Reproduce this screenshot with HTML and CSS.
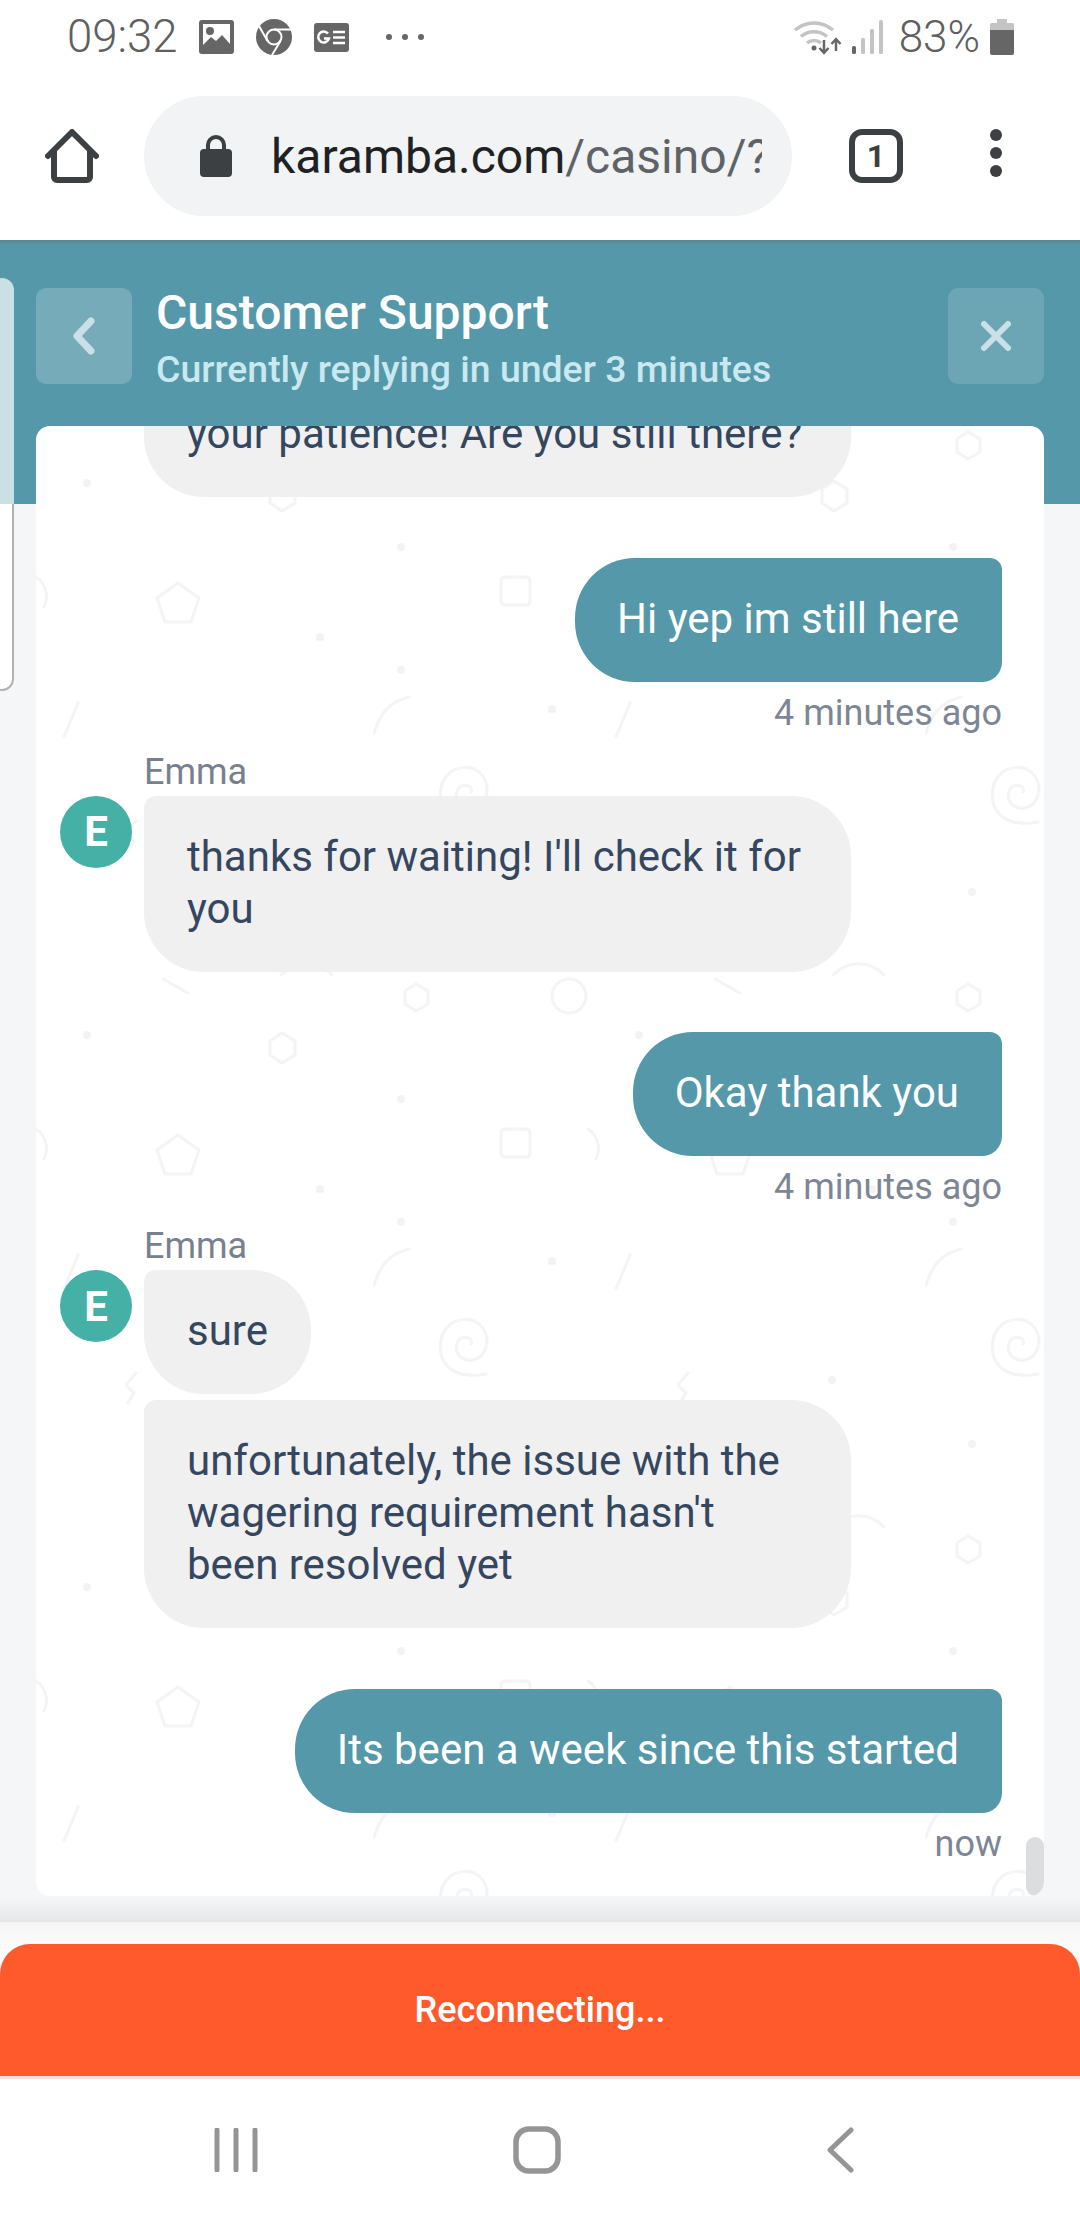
FILE: index.html
```html
<!DOCTYPE html>
<html lang="en">
<head>
<meta charset="utf-8">
<title>Customer Support</title>
<link rel="stylesheet" href="styles.css">
</head>
<body>
<div class="phone">
  <div class="status">
    <span class="clock">09:32</span>
    <svg class="st-img" width="35" height="34" viewBox="0 0 35 34"><rect width="35" height="34" rx="3" fill="#666"/><path d="M4 4h27v20l-8-9-6 6-5-4-8 8z" fill="#fff"/><circle cx="11" cy="11" r="4" fill="#666"/></svg>
    <svg class="st-chrome" width="36" height="36" viewBox="0 0 36 36"><circle cx="18" cy="18" r="18" fill="#666"/><circle cx="18" cy="18" r="7.5" fill="#666" stroke="#fff" stroke-width="2"/><path d="M18 10.500h17M11.500 22 3 7M24.500 22 16 36" fill="none" stroke="#fff" stroke-width="2"/></svg>
    <svg class="st-news" width="35" height="29" viewBox="0 0 35 29"><rect width="35" height="29" rx="3" fill="#666"/><path d="M14 10.500a5.500 5.500 0 1 0 1 5h-5" fill="none" stroke="#fff" stroke-width="2.500"/><path d="M19 9h12M19 14.500h12M19 20h12" stroke="#fff" stroke-width="2.500"/></svg>
    <span class="st-more"><i></i><i></i><i></i></span>
    <span class="st-spacer"></span>
    <svg class="st-wifi" width="50" height="38" viewBox="0 0 50 38"><path d="M2 12a29 29 0 0 1 38 0" fill="none" stroke="#c4c4c4" stroke-width="3.500"/><path d="M8 18.500a20 20 0 0 1 26 0" fill="none" stroke="#c4c4c4" stroke-width="3.500"/><path d="M14 25a11 11 0 0 1 14 0" fill="none" stroke="#c4c4c4" stroke-width="3.500"/><circle cx="21" cy="30" r="2.500" fill="#666"/><path d="M31 22v13M26.500 30l4.500 5 4.500-5M43 33V21M38.500 26l4.500-5 4.500 5" fill="none" stroke="#666" stroke-width="2.500"/></svg>
    <svg class="st-signal" width="31" height="34" viewBox="0 0 31 34"><rect x="0" y="26" width="4" height="8" rx="1.500" fill="#666"/><rect x="9" y="18" width="4" height="16" rx="1.500" fill="#c4c4c4"/><rect x="18" y="9" width="4" height="25" rx="1.500" fill="#c4c4c4"/><rect x="27" y="0" width="4" height="34" rx="1.500" fill="#c4c4c4"/></svg>
    <span class="pct">83%</span>
    <svg class="st-batt" width="24" height="36" viewBox="0 0 24 36"><path d="M7 0h10v4h5a2 2 0 0 1 2 2v7H0V6a2 2 0 0 1 2-2h5z" fill="#c4c4c4"/><path d="M0 11h24v23a2 2 0 0 1-2 2H2a2 2 0 0 1-2-2z" fill="#666"/></svg>
  </div>

  <div class="toolbar">
    <svg class="tb-home" width="54" height="54" viewBox="0 0 54 54"><path d="M3 27 27 3l24 24M9 22v26a3 3 0 0 0 3 3h30a3 3 0 0 0 3-3V22" fill="none" stroke="#3c4043" stroke-width="6" stroke-linecap="round" stroke-linejoin="round"/></svg>
    <div class="url">
      <svg class="lock" width="32" height="42" viewBox="0 0 32 42"><path d="M8 16v-6a8 8 0 0 1 16 0v6" fill="none" stroke="#3c4043" stroke-width="4"/><rect y="14" width="32" height="28" rx="4" fill="#3c4043"/></svg>
      <span class="url-text"><b>karamba.com</b>/casino/?</span>
    </div>
    <div class="tabs">1</div>
    <div class="menu"><i></i><i></i><i></i></div>
  </div>

  <main class="main">
    <div class="sliver"></div>
    <header class="head">
      <button class="head-btn back"><svg width="24" height="38" viewBox="0 0 24 38"><path d="M19 4 5 19l14 15" fill="none" stroke="#c9e1e6" stroke-width="7" stroke-linecap="round" stroke-linejoin="round"/></svg></button>
      <div class="head-text">
        <div class="title">Customer Support</div>
        <div class="sub">Currently replying in under 3 minutes</div>
      </div>
      <button class="head-btn close"><svg width="30" height="30" viewBox="0 0 30 30"><path d="M3 3l24 24M27 3 3 27" fill="none" stroke="#c9e1e6" stroke-width="6" stroke-linecap="round"/></svg></button>
    </header>

    <section class="card">
      <svg class="pattern" width="1008" height="1470" aria-hidden="true">
        <defs>
          <pattern id="doodles" patternUnits="userSpaceOnUse" x="-36" y="-426" width="552" height="552">
            <g fill="#f2f3f4">
              <circle cx="87" cy="483" r="4"/><circle cx="401" cy="547" r="4"/><circle cx="320" cy="85" r="4"/><circle cx="401" cy="118" r="4"/><circle cx="0" cy="157" r="4"/><circle cx="552" cy="157" r="4"/><circle cx="420" cy="340" r="4"/><circle cx="280" cy="276" r="4"/>
            </g>
            <g fill="none" stroke="#f3f4f5" stroke-width="3" stroke-linecap="round" stroke-linejoin="round">
              <path d="M178 31l21 15-8 24h-26l-8-24z"/>
              <rect x="501" y="25" width="29" height="28" rx="4"/>
              <path d="M416 432l12 7v13l-12 7-11-7v-13z"/>
              <circle cx="17" cy="444" r="17"/>
              <circle cx="569" cy="444" r="17"/>
              <path d="M282 481l13 8v14l-13 8-12-8v-14z"/>
              <path d="M78 151 64 185"/>
              <path d="M410 145c-20 4-30 16-36 36"/>
              <path d="M36 25c12 8 12 22 8 30"/>
              <path d="M281 423c14-14 36-16 51 0"/>
              <path d="M163 427l25 14"/>
              <path d="M136 269l-10 12 8 8-6 10"/>
              <path d="M471 240c3-6-7-9-12-4-6 7-2 18 8 20 12 2 21-9 20-21-2-14-14-22-27-19-15 3-22 18-19 34 3 14 17 25 45 20"/>
            </g>
          </pattern>
        </defs>
        <rect width="1008" height="1470" fill="url(#doodles)"/>
      </svg>

      <div class="list">
        <div class="agent first">
          <div class="bubbles">
            <div class="bubble in">Thanks for waiting and for<br>your patience! Are you still there?</div>
          </div>
        </div>

        <div class="mine">
          <div class="bubble out">Hi yep im still here</div>
          <div class="time">4 minutes ago</div>
        </div>

        <div class="name">Emma</div>
        <div class="agent">
          <div class="avatar">E</div>
          <div class="bubbles">
            <div class="bubble in">thanks for waiting! I'll check it for you</div>
          </div>
        </div>

        <div class="mine">
          <div class="bubble out">Okay thank you</div>
          <div class="time">4 minutes ago</div>
        </div>

        <div class="name">Emma</div>
        <div class="agent">
          <div class="avatar">E</div>
          <div class="bubbles">
            <div class="bubble in">sure</div>
            <div class="bubble in">unfortunately, the issue with the wagering requirement hasn't been resolved yet</div>
          </div>
        </div>

        <div class="mine">
          <div class="bubble out">Its been a week since this started</div>
          <div class="time">now</div>
        </div>
      </div>
      <div class="thumb"></div>
    </section>
  </main>

  <div class="banner-zone">
    <div class="banner">Reconnecting...</div>
  </div>

  <nav class="nav">
    <svg width="44" height="44" viewBox="0 0 44 44"><path d="M3 2v40M22 2v40M41 2v40" stroke="#959595" stroke-width="5" stroke-linecap="round"/></svg>
    <svg width="48" height="48" viewBox="0 0 48 48"><rect x="3" y="3" width="42" height="42" rx="13" fill="none" stroke="#959595" stroke-width="5.500"/></svg>
    <svg width="28" height="46" viewBox="0 0 28 46"><path d="M25 3 4 23l21 20" fill="none" stroke="#959595" stroke-width="5" stroke-linecap="round" stroke-linejoin="round"/></svg>
  </nav>
</div>
</body>
</html>
```

FILE: styles.css
```css
* { box-sizing: border-box; }
html, body { margin: 0; padding: 0; background: #fff; }
body { font-family: Roboto, "Noto Sans", sans-serif; }

.phone { width: 1080px; height: 2220px; display: flex; flex-direction: column; overflow: hidden; background: #fff; }

/* status bar */
.status { height: 74px; flex: none; display: flex; align-items: center; padding: 0 66px 0 67px; color: #666; }
.clock, .pct { font-weight: 300; color: #5f5f5f; line-height: 1; }
.clock { font-size: 45.5px; }
.pct { font-size: 44px; margin-left: 16px; }
.st-img { margin-left: 21px; }
.st-chrome { margin-left: 22px; }
.st-news { margin-left: 22px; }
.st-more { display: flex; gap: 10px; margin-left: 37px; }
.st-more i { width: 6px; height: 6px; border-radius: 50%; background: #666; display: block; }
.st-spacer { flex: 1; }
.st-signal { margin-left: 9px; }
.st-batt { margin-left: 10px; }

/* browser toolbar */
.toolbar { height: 166px; flex: none; display: flex; align-items: flex-start; padding: 22px 0 0 45px; }
.tb-home { margin-top: 33px; flex: none; }
.url { width: 648px; height: 120px; margin-left: 45px; flex: none; border-radius: 60px; background: #f1f3f4; display: flex; align-items: center; padding-left: 56px; overflow: hidden; }
.lock { flex: none; }
.url-text { margin-left: 39px; width: 491px; overflow: hidden; white-space: nowrap; font-size: 48px; color: #5f6368; }
.url-text b { font-weight: 400; color: #202124; }
.tabs { width: 54px; height: 54px; margin: 33px 0 0 57px; flex: none; border: 6px solid #3c4043; border-radius: 13px; font-size: 32px; font-weight: 700; color: #3c4043; display: flex; align-items: center; justify-content: center; }
.menu { margin: 33px 0 0 87px; display: flex; flex-direction: column; gap: 6px; }
.menu i { width: 12px; height: 12px; border-radius: 50%; background: #3c4043; display: block; }

/* chat panel */
.main { position: relative; height: 1682px; flex: none; background: linear-gradient(#5a8390 0, #5498a9 4px, #5498a9 264px, #f4f6f8 264px, #f4f6f8 1656px, #e5e7e9 1682px); }
.sliver { position: absolute; left: -10px; top: 38px; width: 24px; height: 413px; border-radius: 12px; border: 2px solid transparent; background: linear-gradient(#c9e0e5 224px, #fff 224px) padding-box, linear-gradient(#c9e0e5 226px, #b0b2b4 226px) border-box; }
.head { display: flex; align-items: flex-start; padding: 48px 36px 0; height: 144px; }
.head-btn { width: 96px; height: 96px; flex: none; border: 0; padding: 0; border-radius: 10px; background: rgba(255, 255, 255, 0.2); display: flex; align-items: center; justify-content: center; }
.close { background: rgba(255, 255, 255, 0.14); }
.head-text { flex: 1; padding-left: 24px; }
.title { font-size: 48px; font-weight: 500; line-height: 50px; color: #fff; }
.sub { font-size: 37.4px; font-weight: 500; line-height: 46px; margin-top: 8px; color: #c9e8ef; }

.card { position: relative; margin: 42px 36px 0; width: 1008px; height: 1470px; border-radius: 14px; background: #fff; overflow: hidden; }
.pattern { position: absolute; left: 0; top: 0; }
.list { position: relative; padding: 0 42px 0 24px; margin-top: -105px; display: flex; flex-direction: column; }

.agent { display: flex; align-items: flex-start; gap: 12px; }
.first { padding-left: 84px; }
.avatar { width: 72px; height: 72px; flex: none; border-radius: 50%; background: #45b1a6; color: #fff; font-size: 42px; font-weight: 700; display: flex; align-items: center; justify-content: center; }
.bubbles { display: flex; flex-direction: column; align-items: flex-start; gap: 6px; }
.bubble { font-size: 42px; line-height: 52px; padding: 35px 43px 37px; }
.in { max-width: 707px; min-width: 0; background: #f0f0f1; color: #35475f; border-radius: 12px 60px 60px 60px; }
.first .in { width: 707px; }
.out { padding-left: 42px; background: #5498a9; color: #fff; border-radius: 60px 12px 20px 60px; }
.mine { display: flex; flex-direction: column; align-items: flex-end; margin-top: 60.5px; }
.time { font-size: 36px; line-height: 44px; margin-top: 9px; color: #7d8694; }
.name { font-size: 36px; line-height: 44px; margin: 15px 0 2px 84px; color: #77808e; }
.thumb { position: absolute; right: 0; bottom: 0; width: 18px; height: 59px; border-radius: 9px; background: #dcddde; }

/* reconnect banner */
.banner-zone { height: 157px; flex: none; padding-top: 22px; background: linear-gradient(#f5f5f5, #fbfbfb 22px); }
.banner { height: 135px; border-radius: 30px 30px 0 0; border-bottom: 3px solid #f5e0d8; background: #ff5a2c; color: #fff; font-size: 36px; font-weight: 500; line-height: 132px; text-align: center; }

/* system nav */
.nav { flex: 1; display: grid; grid-template-columns: 214px 44px 255px 48px 265px 28px; align-items: center; }
.nav svg:nth-child(1) { grid-column: 2; }
.nav svg:nth-child(2) { grid-column: 4; }
.nav svg:nth-child(3) { grid-column: 6; }
```
